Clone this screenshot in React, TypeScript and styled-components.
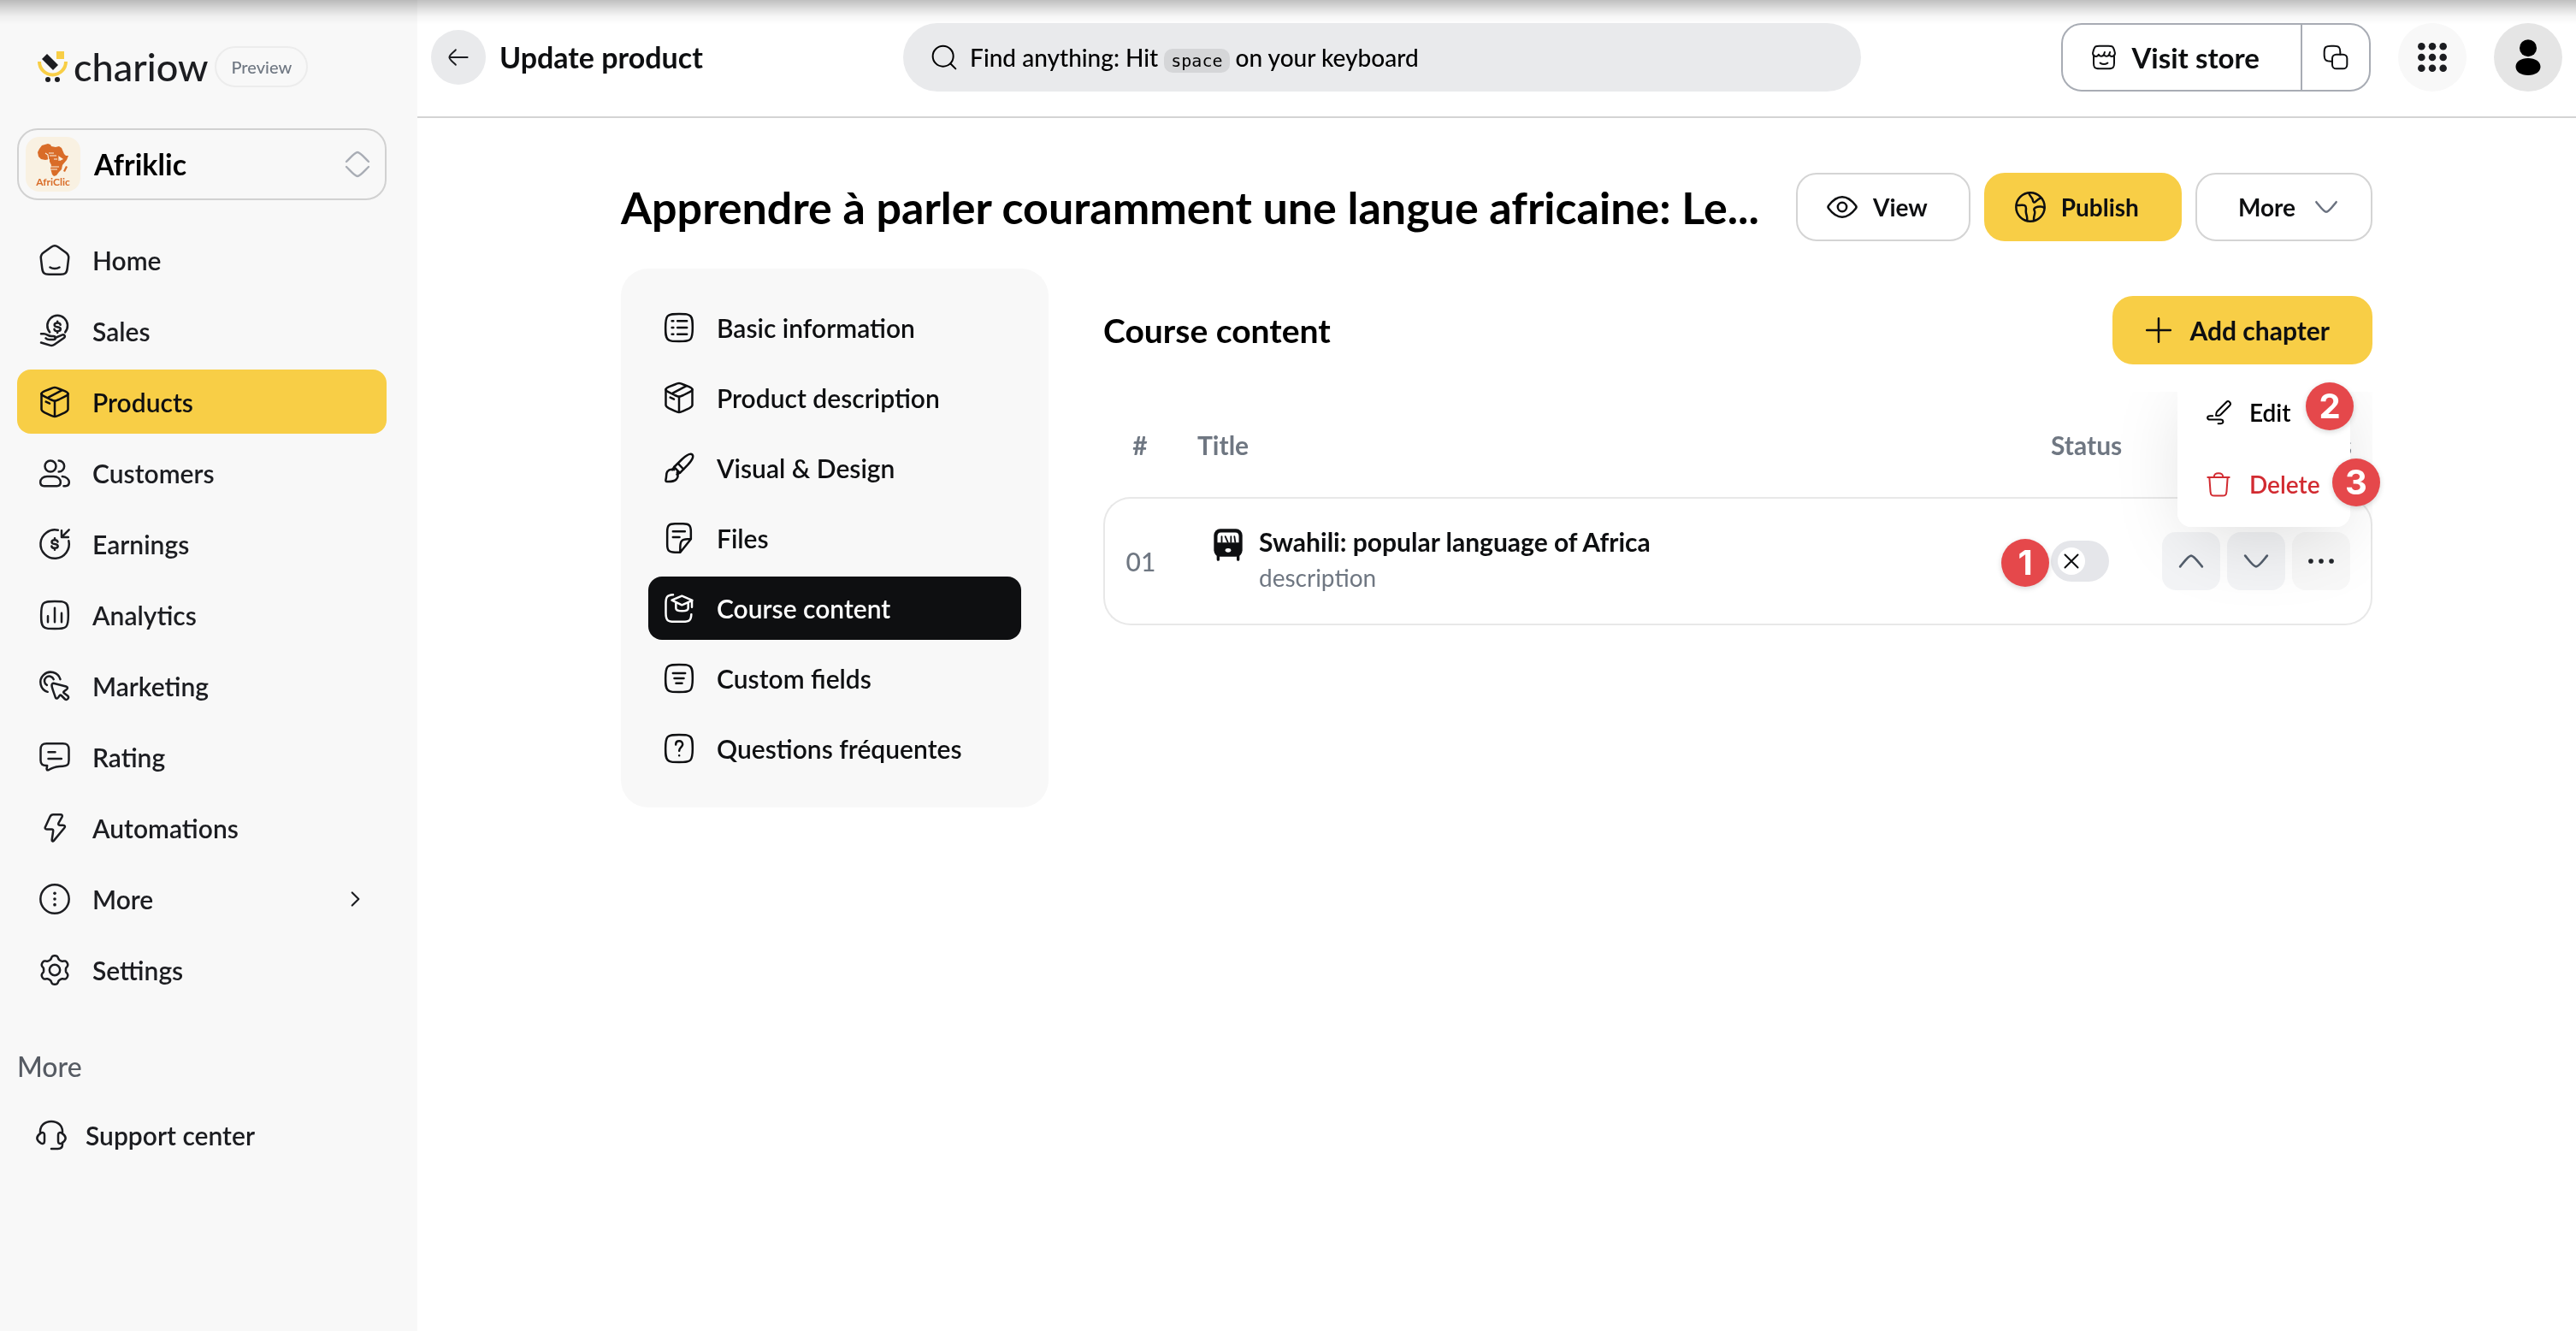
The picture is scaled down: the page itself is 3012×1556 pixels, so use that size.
import React from "react";
import styled, { createGlobalStyle, css } from "styled-components";

const color = {
  ink: "#0e0f11",
  text: "#1c1d21",
  muted: "#6f7782",
  yellow: "#f8ce46",
  panel: "#f8f8f8",
  line: "#d4d4d4",
  softLine: "#e8e8e8",
  danger: "#d22b31",
  badge: "#e5484b",
};

const GlobalStyle = createGlobalStyle`
  *, *::before, *::after { box-sizing: border-box; }
  body {
    margin: 0;
    background: #fff;
    color: ${color.ink};
    font-family: Lato, "Noto Sans", sans-serif;
    font-size: 30px;
    line-height: 36px;
  }
  button, input { font: inherit; color: inherit; }
  button { cursor: pointer; border: 0; background: none; padding: 0; margin: 0; }
  a { color: inherit; text-decoration: none; }
  h1, h2, p { margin: 0; }
`;

/* ---------- icons ---------- */

const gearPath = (() => {
  const steps = 144;
  const points: string[] = [];
  for (let i = 0; i < steps; i++) {
    const a = (i / steps) * Math.PI * 2;
    const r = 8.9 + 1.25 * Math.tanh(1.6 * Math.cos(6 * a));
    points.push(`${(12 + r * Math.sin(a)).toFixed(2)} ${(12 - r * Math.cos(a)).toFixed(2)}`);
  }
  return `M${points.join("L")}Z`;
})();

const squircle =
  "M12 2.4c-4.9 0-6.7.1-8 1.5S2.5 7.300 2.500 12s.1 6.700 1.500 8.100 3.100 1.500 8 1.500 6.700-.1 8-1.500 1.500-3.400 1.500-8.100-.1-6.700-1.500-8.100-3.100-1.500-8-1.500z";

const dollar =
  "M2.100-1.500C1.900-2.400 1.100-2.900 0-2.900c-1.200 0-2.100.6-2.100 1.500S-1.300-.2 0 0s2.200.5 2.200 1.500S1.200 2.900 0 2.900-2.100 2.400-2.200 1.500M0-4v1.100M0 2.900V4";

const icons: Record<string, React.ReactNode> = {
  home: (
    <>
      <path d="M9.600 2.900C10.600 2.200 11.200 2 12 2s1.400.2 2.400.9l5.400 3.900c1.700 1.200 2.100 2 1.900 3.900l-.8 6.700c-.4 3.600-1.300 4.600-4.800 4.600H7.900c-3.500 0-4.400-1-4.800-4.600l-.8-6.700c-.2-1.900.2-2.700 1.900-3.900z" />
      <path d="M8.700 17.100c.9.6 2 .9 3.300.9s2.400-.3 3.300-.9" />
    </>
  ),
  sales: (
    <>
      <path d="M8.500 12.800a7.100 7.100 0 1 1 10.800 0" />
      <g transform="translate(13.900 9.200)"><path d={dollar} /></g>
      <path d="M2.400 14h2c1 0 1.700.3 2.500.8s1.700.8 3 .8H11c2 0 2 2.400 0 2.400H8.200c-1 0-1.800-.3-2.500-1" />
      <path d="M12.300 16.800l4.400-1.900c2-.9 3.400.8 1.600 2.100l-6.500 4.500c-1 .7-2 .9-3.200.5l-6.200-1.900" />
    </>
  ),
  box: (
    <>
      <path d="M12 22.200c-.8 0-1.600-.3-3.100-1L5 19.400c-1.600-.8-2.300-1.200-2.300-2.300V6.200M12 22.200c.8 0 1.600-.3 3.100-1l3.900-1.800c1.600-.8 2.300-1.200 2.300-2.300V6.200M12 22.200V11.200" />
      <path d="M2.700 6.200c0-.9.8-1.200 2.300-1.900l4-1.600c1.500-.7 2.200-.9 3-.9s1.500.2 3 .9l4 1.600c1.500.7 2.300 1 2.300 1.900s-.8 1.300-2.300 2l-4 2c-1.500.7-2.200 1-3 1s-1.500-.3-3-1l-4-2c-1.500-.7-2.300-1.100-2.300-2z" />
      <path d="M16.900 3.800L7.500 8.800M5.800 11.800l2.600 1.200" />
    </>
  ),
  customers: (
    <>
      <circle cx="9" cy="7.200" r="3.900" />
      <path d="M14.800 3.300a3.900 3.900 0 0 1 0 7.800M1.900 18.500c0-2.400 2-4.100 4.700-4.100h4.700c2.700 0 4.800 1.700 4.800 4.100 0 1.600-1 2.600-2.600 2.600h-9c-1.600 0-2.600-1-2.600-2.600z" />
      <path d="M17.300 14.400c2.600.2 4.800 1.800 4.800 4.100 0 1.600-1 2.600-2.600 2.600h-1.200" />
    </>
  ),
  earnings: (
    <>
      <path d="M14.300 2.300A10 10 0 1 0 21.800 9.800" />
      <path d="M22 2l-5 5M16.800 2.600v4.600h4.700" />
      <g transform="translate(12 12)"><path d={dollar} /></g>
    </>
  ),
  analytics: (
    <>
      <path d={squircle} />
      <path d="M7.200 17v-4.300M12 17V7M16.800 17v-6.300" />
    </>
  ),
  marketing: (
    <>
      <path d="M7 16.100A7.100 7.100 0 1 1 15.900 7.300" />
      <path d="M6.500 11.300a3.300 3.300 0 1 1 4.700-4" />
      <path d="M9.900 11.900c-.2-1.300.6-2 1.800-1.700l8.200 2.100c1.300.4 1.400 1.400.4 2.100l-1.800 1.300c-.5.4-.5.8 0 1.200l2.800 2.200c1 1.200-.7 3.100-2 2.200l-2.700-2.700c-.4-.4-.8-.4-1.100 0l-1.100 1.500c-.8 1-1.700.8-2-.4-.8-2.500-2-5.200-2.500-7.800z" />
    </>
  ),
  rating: (
    <>
      <path d="M6.300 2.600h11.400c3 0 4.200 1 4.200 4.200v7.400c0 3.200-1.100 4.100-4.200 4.200-3.500.1-5.500.3-8 1.600l-1.900 1c-1.100.5-1.600.1-1.400-1l.3-2C3.400 18.200 2.100 17.200 2.100 14.200V6.800c0-3.200 1.200-4.200 4.200-4.200z" />
      <path d="M7.500 8.600h4.800M7.500 13.200h9.200" />
    </>
  ),
  automations: (
    <path d="M10.900 2.600h5.100c1.200 0 1.600.7 1.100 1.700l-2.400 4.200c-.4.8-.1 1.500.8 1.500h2.300c1.400 0 1.800 1 .9 2l-7.400 8.900c-.6.7-1.400.4-1.300-.5l.9-6.200c.1-.8-.2-1.300-1-1.300H6.500c-1.200 0-1.600-.7-1.100-1.700L8.700 4.100c.5-1 1.200-1.500 2.200-1.500z" />
  ),
  more: (
    <>
      <circle cx="12" cy="12" r="10" />
      <g fill="currentColor" stroke="none">
        <circle cx="12" cy="8" r="1.100" /><circle cx="12" cy="12" r="1.100" /><circle cx="12" cy="16" r="1.100" />
      </g>
    </>
  ),
  settings: (
    <>
      <path d={gearPath} />
      <circle cx="12" cy="12" r="3.700" />
    </>
  ),
  support: (
    <>
      <path d="M4.200 10.200V9.500C4.200 5.300 7.400 2.400 12 2.400s7.800 2.900 7.800 7.100v.7" />
      <path d="M7.200 11.800v4.600c0 1.600-1.500 2-2.700 1.100C2.800 16.400 2 15.600 2 14.100s.8-2.300 2.500-3.400c1.200-.9 2.700-.5 2.700 1.100zM16.800 11.800v4.600c0 1.600 1.500 2 2.700 1.100 1.700-1.100 2.500-1.900 2.500-3.400s-.8-2.300-2.500-3.400c-1.200-.9-2.700-.5-2.700 1.100z" />
      <path d="M19.800 17.800v.8c0 2-1.200 3-3.200 3H12" />
    </>
  ),
  list: (
    <>
      <path d={squircle} />
      <path d="M10.900 7.400h6.600M10.900 12h6.600M10.900 16.600h6.600M7 7.400h1M7 12h1M7 16.600h1" />
    </>
  ),
  brush: (
    <>
      <path d="M21.300 2.700c-1.300-1.200-4.500.7-7.300 3.300L8.500 11.400l4.100 4.100L18 10c2.600-2.800 4.500-6 3.300-7.300z" />
      <path d="M11.300 8.900l3.800 4M8.500 13.300c-2-.6-3.700-.1-4.700 1.200-1 1.400-.4 3-1.100 5.600-.2.900 0 1.500.9 1.500 2.600.1 5.100-.2 6.400-1.500 1.300-1.400 1.500-3.100.7-5" />
      <path d="M8.700 11.300l-1.500 2M12.500 15.400l-2 1.200" />
    </>
  ),
  file: (
    <>
      <path d="M20.300 12.800V7.500c0-4.200-1-5.500-5.500-5.500H9.200c-4.500 0-5.500 1.300-5.500 5.500v9c0 4.200 1 5.500 5.500 5.500h3.600zM12.800 22v-3.500c0-4.300 1-5.600 5-5.700h2.500M12.800 22l7.500-9.200" />
      <path d="M7.700 7.400h8.400M7.700 11.400h4.600" />
    </>
  ),
  course: (
    <>
      <path d="M7.800 2.600c-4.300.3-5.100 1.500-5.100 6.100v6.600c0 5 1.100 6.200 6 6.200h6c4.600 0 5.700-1 5.900-5.200" />
      <path d="M6.900 6.400L14 3.400l7.300 3.100L14 9.800zM9.800 8v4c0 2.600 8.600 2.600 8.600 0V8M21 6.800v4.500" />
    </>
  ),
  fields: (
    <>
      <path d={squircle} />
      <path d="M7.700 8.400h8.600M8.700 12h6.600M9.900 15.500h4.200" />
    </>
  ),
  question: (
    <>
      <path d={squircle} />
      <path d="M9.700 9.300c0-1.500 1-2.500 2.400-2.500s2.400 1 2.400 2.400c0 1.900-2.400 2.200-2.400 4.400M12.100 16.900v.1" />
    </>
  ),
  eye: (
    <>
      <path d="M21.500 11c.6.700.6 1.300 0 2-2 2.600-5.300 6-9.500 6s-7.500-3.400-9.500-6c-.6-.7-.6-1.300 0-2 2-2.600 5.300-6 9.500-6s7.500 3.400 9.500 6z" />
      <circle cx="12" cy="12" r="3.100" />
    </>
  ),
  globe: (
    <>
      <circle cx="12" cy="12" r="10" />
      <path d="M11 2.200c.5 2.400 2.600 3.200 2.700 5 .1 1.500 1 2 2 1 1.400-1.400 3-2.700 4.200-2.300M2.300 10.600c3.300.6 4-.4 5.700.3 1.700.8.700 2.700.9 4.600.2 2.200 1.300 3.500.7 6M21.800 12.700c-1.600-1.600-3.600-1-5.200-.7-2 .4-2.300 1.600-1.700 2.700 1 1.600-.9 3.300-.4 6.700" />
    </>
  ),
  chevronDown: <path d="M5 8.500c3 3.700 5.300 7 7 7s4-3.300 7-7" />,
  chevronUp: <path d="M5 15.500c3-3.700 5.300-7 7-7s4 3.300 7 7" />,
  chevronRight: <path d="M9 5l7 7-7 7" />,
  back: <path d="M3.500 12h17M9.500 5C7 7.600 3.500 9.800 3.500 12s3.500 4.400 6 7" />,
  plus: <path d="M12 3.700v16.600M3.700 12h16.600" />,
  close: <path d="M3 3l18 18M21 3L3 21" />,
  search: (
    <>
      <circle cx="11" cy="11" r="9" />
      <path d="M17.800 17.800l4.200 4.200" />
    </>
  ),
  store: (
    <>
      <path d="M3 11.500V17c0 3.800.8 5 5 5h8c4.200 0 5-1.200 5-5v-5.500" />
      <path d="M8 2h8c3.200 0 4 .5 4.800 3 .6 1.900 1.200 3.200.8 4.300-.9 2.700-4.300 2.200-5 .2-.6 1.700-3.300 2.300-4.600 0-1.200 2.300-4 1.700-4.600 0-.7 2-4.100 2.500-5-.2C2 8.200 2.600 6.900 3.200 5 4 2.500 4.800 2 8 2zM16.600 9.500l.7-2M12 9.500l.7-2M8.700 17c2 1.300 4.600 1.300 6.600 0" />
    </>
  ),
  copy: (
    <>
      <rect x="9" y="9.500" width="13" height="12.500" rx="3.500" />
      <path d="M9 15.500H8c-4.500 0-6-1-6-5.500V7.500C2 3 3.500 2 8 2h2.500C15 2 16 3.500 16 7.500v2" />
    </>
  ),
  grid: (
    <g fill="currentColor" stroke="none">
      {[4, 12, 20].map((y) => [4, 12, 20].map((x) => <circle key={`${x}-${y}`} cx={x} cy={y} r="2.700" />))}
    </g>
  ),
  user: (
    <g fill="currentColor" stroke="none">
      <circle cx="12" cy="5.500" r="6" />
      <path d="M12 12.600c5.200 0 8.700 2.500 8.700 6s-3.500 6-8.700 6-8.700-2.500-8.700-6 3.500-6 8.700-6z" />
    </g>
  ),
  edit: (
    <>
      <path d="M9.800 14.900c0-1.900.2-2.800 1-3.600l8-8.100c1.200-1.200 2.200-1.200 3 0 .9.900.9 2-.1 3l-8 8c-1 .9-1.900.9-3.900.7z" />
      <path d="M6.900 15.200H4.600c-3 0-3 3.200 0 3.200h9.100c3 0 3.200 3.600 0 3.600h-2" />
    </>
  ),
  trash: (
    <>
      <path d="M4 6l.9 12.500C5.200 21.500 6 22.200 8.500 22.200h7c2.500 0 3.300-.7 3.600-3.700L20 6M2.500 6h19M8 5.800C8.300 3.200 9.300 2.500 12 2.500s3.700.7 4 3.300" />
    </>
  ),
  dots: (
    <g fill="currentColor" stroke="none">
      <circle cx="3.500" cy="12" r="2" /><circle cx="12" cy="12" r="2" /><circle cx="20.500" cy="12" r="2" />
    </g>
  ),
  module: (
    <>
      <rect x="2" y="2" width="20" height="19.500" rx="4.500" fill="currentColor" stroke="none" />
      <path d="M5 20v3.500M19 20v3.500" strokeWidth="2" />
      <path d="M7 4.500h10c1.600 0 2.500.9 2.500 2.500v4.500h-15V7c0-1.600.9-2.500 2.500-2.500z" fill="#fff" stroke="none" />
      <path d="M7.500 7.300v4M10 7.300l1.800 4M14 7.300v4M16.400 7.300l.6 4" strokeWidth="1.100" />
      <ellipse cx="12" cy="17" rx="2" ry="1.400" fill="#fff" stroke="none" />
    </>
  ),
};

const Svg = styled.svg`
  display: block;
  flex: none;
  overflow: visible;
  fill: none;
  stroke: currentColor;
  stroke-linecap: round;
  stroke-linejoin: round;
`;

const Icon = ({ name, size = 40, stroke = 1.5 }: { name: string; size?: number; stroke?: number }) => (
  <Svg viewBox="0 0 24 24" width={size} height={size} strokeWidth={stroke} aria-hidden="true">
    {icons[name]}
  </Svg>
);

/* ---------- shell ---------- */

const Shell = styled.div`
  display: grid;
  grid-template-columns: 488px minmax(0, 1fr);
  min-height: 100vh;
`;

const TopShade = styled.div`
  position: fixed;
  inset: 0 0 auto;
  height: 28px;
  z-index: 10;
  pointer-events: none;
  background: linear-gradient(rgba(0, 0, 0, 0.25), rgba(0, 0, 0, 0.12) 38%, rgba(0, 0, 0, 0.04) 68%, transparent);
`;

/* ---------- sidebar ---------- */

const Sidebar = styled.aside`
  background: ${color.panel};
  color: ${color.text};
  padding: 54px 36px 32px 20px;
`;

const Brand = styled.div`
  display: flex;
  align-items: center;
  height: 48px;
  padding-left: 24px;
  margin-bottom: 48px;
`;

const BrandName = styled.span`
  margin-left: 6px;
  font-size: 45px;
  font-weight: 500;
  line-height: 48px;
`;

const PreviewTag = styled.span`
  margin-left: 8px;
  height: 48px;
  padding: 0 17px;
  border: 2px solid #ececec;
  border-radius: 24px;
  color: ${color.muted};
  font-size: 20px;
  font-weight: 500;
  line-height: 44px;
`;

const StorePicker = styled.button`
  display: flex;
  align-items: center;
  width: 100%;
  height: 84px;
  padding: 0 18px 0 8px;
  border: 2px solid #d1d1d1;
  border-radius: 24px;
  font-size: 34px;
  font-weight: 700;
  color: #000;
`;

const StoreLogo = styled.span`
  display: flex;
  flex-direction: column;
  align-items: center;
  width: 64px;
  height: 64px;
  margin-right: 16px;
  padding-top: 8px;
  border-radius: 16px;
  background: #f9f1e2;
  color: #d96c28;
  font-size: 12px;
  font-weight: 700;
  line-height: 14px;
`;

const PickerArrows = styled.span`
  margin-left: auto;
  color: #a9adb5;
`;

const NavList = styled.nav`
  display: flex;
  flex-direction: column;
  gap: 8px;
  margin-top: 32px;
`;

const NavLink = styled.a<{ $active?: boolean }>`
  display: flex;
  align-items: center;
  gap: 24px;
  height: 75px;
  padding: 0 24px;
  border-radius: 16px;
  font-weight: 600;
  ${(p) => p.$active && css`background: ${color.yellow}; color: ${color.ink};`}
`;

const NavTail = styled.span`
  margin-left: auto;
`;

const NavHeading = styled.h2`
  margin: 58px 0 24px;
  font-size: 32px;
  font-weight: 500;
  line-height: 36px;
  color: #565b63;
`;

const SupportLink = styled(NavLink)`
  gap: 20px;
  padding: 0 20px;
`;

/* ---------- header ---------- */

const Page = styled.div`
  min-width: 0;
`;

const Header = styled.header`
  display: flex;
  align-items: center;
  justify-content: space-between;
  height: 138px;
  padding: 0 16px 2px;
  border-bottom: 2px solid ${color.line};
`;

const HeaderGroup = styled.div`
  display: flex;
  align-items: center;
  gap: 32px;
`;

const TitleGroup = styled(HeaderGroup)`
  gap: 16px;
`;

const PageTitle = styled.p`
  font-size: 34px;
  font-weight: 700;
`;

const RoundButton = styled.button<{ $size: number; $bg: string }>`
  display: grid;
  place-items: center;
  width: ${(p) => p.$size}px;
  height: ${(p) => p.$size}px;
  border-radius: 50%;
  background: ${(p) => p.$bg};
  color: ${color.text};
`;

const AccountButton = styled(RoundButton)`
  color: #000;
`;

const SearchButton = styled.button`
  display: flex;
  align-items: center;
  gap: 14px;
  width: 1120px;
  height: 80px;
  padding: 0 32px;
  border-radius: 40px;
  background: #e9eaec;
  color: #000;
  font-size: 28px;
  font-weight: 500;
`;

const Key = styled.kbd`
  display: inline-block;
  padding: 0 8px;
  border-radius: 10px;
  background: #d5d6d8;
  font-family: "DejaVu Sans Mono", monospace;
  font-size: 20px;
  line-height: 28px;
`;

const StoreButtons = styled.div`
  display: flex;
  height: 80px;
  border: 2px solid #a8acb4;
  border-radius: 24px;
`;

const VisitStore = styled.a`
  display: flex;
  align-items: center;
  gap: 16px;
  padding: 0 48px 0 32px;
  font-size: 33px;
  font-weight: 700;
`;

const CopyLink = styled.button`
  display: grid;
  place-items: center;
  width: 80px;
  border-left: 2px solid #a8acb4;
`;

/* ---------- content ---------- */

const Content = styled.main`
  max-width: 2048px;
  margin: 0 auto;
  padding-top: 64px;
`;

const ProductBar = styled.div`
  display: flex;
  align-items: center;
  gap: 16px;
`;

const ProductName = styled.h1`
  flex: 1;
  min-width: 0;
  font-size: 52px;
  font-weight: 700;
  line-height: 64px;
  white-space: nowrap;
  color: #000;
`;

const Button = styled.button<{ $primary?: boolean }>`
  display: flex;
  align-items: center;
  height: 80px;
  padding: 0 32px;
  border: 2px solid ${(p) => (p.$primary ? color.yellow : color.line)};
  border-radius: 24px;
  background: ${(p) => (p.$primary ? color.yellow : "#fff")};
  font-weight: 700;
`;

const BarButton = styled(Button)`
  font-size: 28px;
`;

const ButtonLabel = styled.span`
  padding: 0 16px;
`;

const Chevron = styled.span`
  color: #6b7280;
`;

const Columns = styled.div`
  display: grid;
  grid-template-columns: 500px minmax(0, 1fr);
  gap: 64px;
  align-items: start;
  margin-top: 32px;
`;

const SectionNav = styled.nav`
  display: flex;
  flex-direction: column;
  gap: 8px;
  padding: 32px;
  border-radius: 32px;
  background: ${color.panel};
`;

const SectionLink = styled.a<{ $active?: boolean }>`
  display: flex;
  align-items: center;
  gap: 24px;
  height: 74px;
  padding: 0 16px;
  border-radius: 16px;
  font-weight: 600;
  ${(p) => p.$active && css`background: ${color.ink}; color: #fff;`}
`;

const Section = styled.section`
  position: relative;
  padding-top: 32px;
`;

const SectionBar = styled.div`
  display: flex;
  align-items: center;
  justify-content: space-between;
`;

const SectionTitle = styled.h2`
  font-size: 39px;
  font-weight: 700;
  line-height: 48px;
  color: #000;
`;

const TableClip = styled.div`
  position: relative;
  overflow: hidden;
  margin-top: 32px;
  padding-bottom: 23px;
`;

const Table = styled.table`
  width: 100%;
  border-spacing: 0;
  table-layout: fixed;
`;

const Th = styled.th<{ $w?: number; $align?: string }>`
  width: ${(p) => (p.$w ? `${p.$w}px` : "auto")};
  height: 123px;
  padding: 0 24px;
  text-align: ${(p) => p.$align || "left"};
  font-weight: 700;
  color: ${color.muted};
`;

const Td = styled.td<{ $align?: string }>`
  height: 150px;
  padding: 0 24px;
  border: solid ${color.softLine};
  border-width: 2px 0;
  text-align: ${(p) => p.$align || "left"};
  &:first-child {
    padding: 0;
    border-left-width: 2px;
    border-radius: 32px 0 0 32px;
    font-weight: 500;
    color: ${color.muted};
  }
  &:last-child {
    border-right-width: 2px;
    border-radius: 0 32px 32px 0;
  }
`;

const Chapter = styled.div`
  display: flex;
  gap: 16px;
  padding: 0 0 6px 16px;
`;

const ChapterTitle = styled.p`
  font-weight: 700;
  line-height: 44px;
`;

const ChapterNote = styled.p`
  font-size: 28px;
  line-height: 40px;
  color: ${color.muted};
`;

const ChapterIcon = styled.span`
  padding-top: 4px;
`;

const Toggle = styled.label`
  display: block;
  position: relative;
  width: 68px;
  height: 48px;
  padding: 8px;
  border-radius: 24px;
  background: #e5e6ea;
`;

const ToggleInput = styled.input`
  position: absolute;
  inset: 0;
  width: 100%;
  height: 100%;
  margin: 0;
  opacity: 0;
`;

const Knob = styled.span`
  display: grid;
  place-items: center;
  width: 32px;
  height: 32px;
  border-radius: 50%;
  background: #fff;
`;

const RowActions = styled.div`
  display: flex;
  justify-content: flex-end;
  gap: 8px;
`;

const SquareButton = styled.button<{ $plain?: boolean }>`
  display: grid;
  place-items: center;
  width: 68px;
  height: 68px;
  border-radius: 16px;
  background: ${(p) => (p.$plain ? "#f8f8f8" : "#f3f4f6")};
  color: ${(p) => (p.$plain ? "#22262b" : "#535e6c")};
`;

const Menu = styled.div`
  position: absolute;
  top: -26px;
  right: 26px;
  display: flex;
  flex-direction: column;
  gap: 8px;
  width: 202px;
  padding: 12px 0;
  border-radius: 16px;
  background: #fff;
`;

/* Multiplied onto the row, so the controls underneath pick up the menu's shade. */
const MenuShade = styled.div`
  position: absolute;
  top: -26px;
  right: 26px;
  width: 202px;
  height: 184px;
  border-radius: 16px;
  box-shadow: 0 24px 90px -16px rgba(0, 0, 0, 0.15);
  mix-blend-mode: multiply;
  pointer-events: none;
`;

const MenuItem = styled.button<{ $danger?: boolean }>`
  display: flex;
  align-items: center;
  gap: 20px;
  height: 76px;
  padding: 0 32px;
  font-size: 28px;
  font-weight: 600;
  color: ${(p) => (p.$danger ? color.danger : "#000")};
`;

const Badge = styled.span<{ $top: number; $right: number }>`
  position: absolute;
  top: ${(p) => p.$top}px;
  right: ${(p) => p.$right}px;
  width: 56px;
  height: 56px;
  border-radius: 50%;
  background: ${color.badge};
  box-shadow: 0 2px 6px rgba(0, 0, 0, 0.16);
  color: #fff;
  font-family: Inter, "Liberation Sans", sans-serif;
  font-size: 40px;
  font-weight: 700;
  line-height: 56px;
  text-align: center;
`;

const navItems = [
  ["home", "Home"],
  ["sales", "Sales"],
  ["box", "Products"],
  ["customers", "Customers"],
  ["earnings", "Earnings"],
  ["analytics", "Analytics"],
  ["marketing", "Marketing"],
  ["rating", "Rating"],
  ["automations", "Automations"],
  ["more", "More"],
  ["settings", "Settings"],
];

const sections = [
  ["list", "Basic information"],
  ["box", "Product description"],
  ["brush", "Visual & Design"],
  ["file", "Files"],
  ["course", "Course content"],
  ["fields", "Custom fields"],
  ["question", "Questions fréquentes"],
];

const CartLogo = () => (
  <svg width="36" height="36" viewBox="0 0 36 36" aria-hidden="true">
    <rect x="22" y="0" width="9" height="9" fill={color.yellow} />
    <path d="M2 12a15.500 15.500 0 0 0 31 0" fill="none" stroke={color.yellow} strokeWidth="4" />
    <path d="M11 3l13 13-6 6L5 9z" fill={color.text} />
    <circle cx="12" cy="33" r="3" fill={color.text} />
    <circle cx="23" cy="33" r="3" fill={color.text} />
  </svg>
);

const Africa = () => (
  <svg width="36" height="38" viewBox="0 0 36 38" aria-hidden="true">
    <path
      d="M5 2l7-2 3 1 1 2 5 1 4-1 3 2 3 7 2 2h3l-2 5-5 6-1 5-3 3-3 4-3 1-2-2-2-7 1-4-2-4v-3l-5 1-5-1-3-3-1-5 2-4z"
      fill="#d96c28"
    />
    <path d="M33 26l2 1-3 6-2-1z" fill="#d96c28" />
    <path d="M9 11l3 2 2 14h11M13 11h6M14 14h8M19 18h4M25 16v4M13 30h10" stroke="#f9f1e2" strokeWidth="1.200" fill="none" />
    <path d="M24 14l6 4-4 2z" fill="#f9f1e2" />
  </svg>
);

export default function App() {
  return (
    <>
      <GlobalStyle />
      <TopShade />
      <Shell>
        <Sidebar>
          <Brand>
            <CartLogo />
            <BrandName>chariow</BrandName>
            <PreviewTag>Preview</PreviewTag>
          </Brand>
          <StorePicker type="button">
            <StoreLogo>
              <Africa />
              AfriClic
            </StoreLogo>
            Afriklic
            <PickerArrows>
              <Svg width="28" height="32" viewBox="0 0 28 32" strokeWidth="2.400" aria-hidden="true">
                <path d="M1 13C7 7 11 2 14 2s7 5 13 11M1 19c6 6 10 11 13 11s7-5 13-11" />
              </Svg>
            </PickerArrows>
          </StorePicker>
          <NavList aria-label="Main">
            {navItems.map(([icon, label]) => (
              <NavLink key={label} href="#" $active={label === "Products"}>
                <Icon name={icon} />
                {label}
                {label === "More" && (
                  <NavTail>
                    <Icon name="chevronRight" size={26} stroke={2} />
                  </NavTail>
                )}
              </NavLink>
            ))}
          </NavList>
          <NavHeading>More</NavHeading>
          <SupportLink href="#">
            <Icon name="support" />
            Support center
          </SupportLink>
        </Sidebar>

        <Page>
          <Header>
            <TitleGroup>
              <RoundButton type="button" aria-label="Back" $size={64} $bg="#e9eaec">
                <Icon name="back" size={30} />
              </RoundButton>
              <PageTitle>Update product</PageTitle>
            </TitleGroup>
            <SearchButton type="button">
              <Icon name="search" size={32} />
              <span>
                Find anything: Hit <Key>space</Key> on your keyboard
              </span>
            </SearchButton>
            <HeaderGroup>
              <StoreButtons>
                <VisitStore href="#">
                  <Icon name="store" size={32} />
                  Visit store
                </VisitStore>
                <CopyLink type="button" aria-label="Copy store link">
                  <Icon name="copy" size={32} />
                </CopyLink>
              </StoreButtons>
              <RoundButton type="button" aria-label="Apps" $size={80} $bg={color.panel}>
                <Icon name="grid" size={38} />
              </RoundButton>
              <AccountButton type="button" aria-label="Account" $size={80} $bg="#e5e5e5">
                <Icon name="user" size={40} />
              </AccountButton>
            </HeaderGroup>
          </Header>

          <Content>
            <ProductBar>
              <ProductName>Apprendre à parler couramment une langue africaine: Le...</ProductName>
              <BarButton type="button">
                <Icon name="eye" />
                <ButtonLabel>View</ButtonLabel>
              </BarButton>
              <BarButton type="button" $primary>
                <Icon name="globe" />
                <ButtonLabel>Publish</ButtonLabel>
              </BarButton>
              <BarButton type="button">
                <ButtonLabel>More</ButtonLabel>
                <Chevron>
                  <Icon name="chevronDown" size={40} />
                </Chevron>
              </BarButton>
            </ProductBar>

            <Columns>
              <SectionNav aria-label="Product sections">
                {sections.map(([icon, label]) => (
                  <SectionLink key={label} href="#" $active={label === "Course content"}>
                    <Icon name={icon} />
                    {label}
                  </SectionLink>
                ))}
              </SectionNav>

              <Section>
                <SectionBar>
                  <SectionTitle>Course content</SectionTitle>
                  <Button type="button" $primary>
                    <Icon name="plus" size={40} />
                    <ButtonLabel>Add chapter</ButtonLabel>
                  </Button>
                </SectionBar>
                <TableClip>
                  <Table>
                    <thead>
                      <tr>
                        <Th $w={86} $align="center">#</Th>
                        <Th>Title</Th>
                        <Th $w={130}>Status</Th>
                        <Th $w={270} $align="right">Actions</Th>
                      </tr>
                    </thead>
                    <tbody>
                      <tr>
                        <Td $align="center">01</Td>
                        <Td>
                          <Chapter>
                            <ChapterIcon>
                              <Icon name="module" size={40} />
                            </ChapterIcon>
                            <div>
                              <ChapterTitle>Swahili: popular language of Africa</ChapterTitle>
                              <ChapterNote>description</ChapterNote>
                            </div>
                          </Chapter>
                        </Td>
                        <Td>
                          <Toggle>
                            <ToggleInput type="checkbox" role="switch" aria-label="Chapter published" />
                            <Knob>
                              <Icon name="close" size={20} stroke={2.4} />
                            </Knob>
                          </Toggle>
                        </Td>
                        <Td>
                          <RowActions>
                            <SquareButton type="button" aria-label="Move up">
                              <Icon name="chevronUp" size={44} />
                            </SquareButton>
                            <SquareButton type="button" aria-label="Move down">
                              <Icon name="chevronDown" size={44} />
                            </SquareButton>
                            <SquareButton type="button" aria-label="More actions" $plain>
                              <Icon name="dots" size={34} />
                            </SquareButton>
                          </RowActions>
                        </Td>
                      </tr>
                    </tbody>
                  </Table>
                  <MenuShade />
                  <Menu>
                    <MenuItem type="button">
                      <Icon name="edit" size={32} />
                      Edit
                    </MenuItem>
                    <MenuItem type="button" $danger>
                      <Icon name="trash" size={32} />
                      Delete
                    </MenuItem>
                  </Menu>
                </TableClip>
                <Badge $top={316} $right={378}>1</Badge>
                <Badge $top={133} $right={22}>2</Badge>
                <Badge $top={222} $right={-9}>3</Badge>
              </Section>
            </Columns>
          </Content>
        </Page>
      </Shell>
    </>
  );
}
